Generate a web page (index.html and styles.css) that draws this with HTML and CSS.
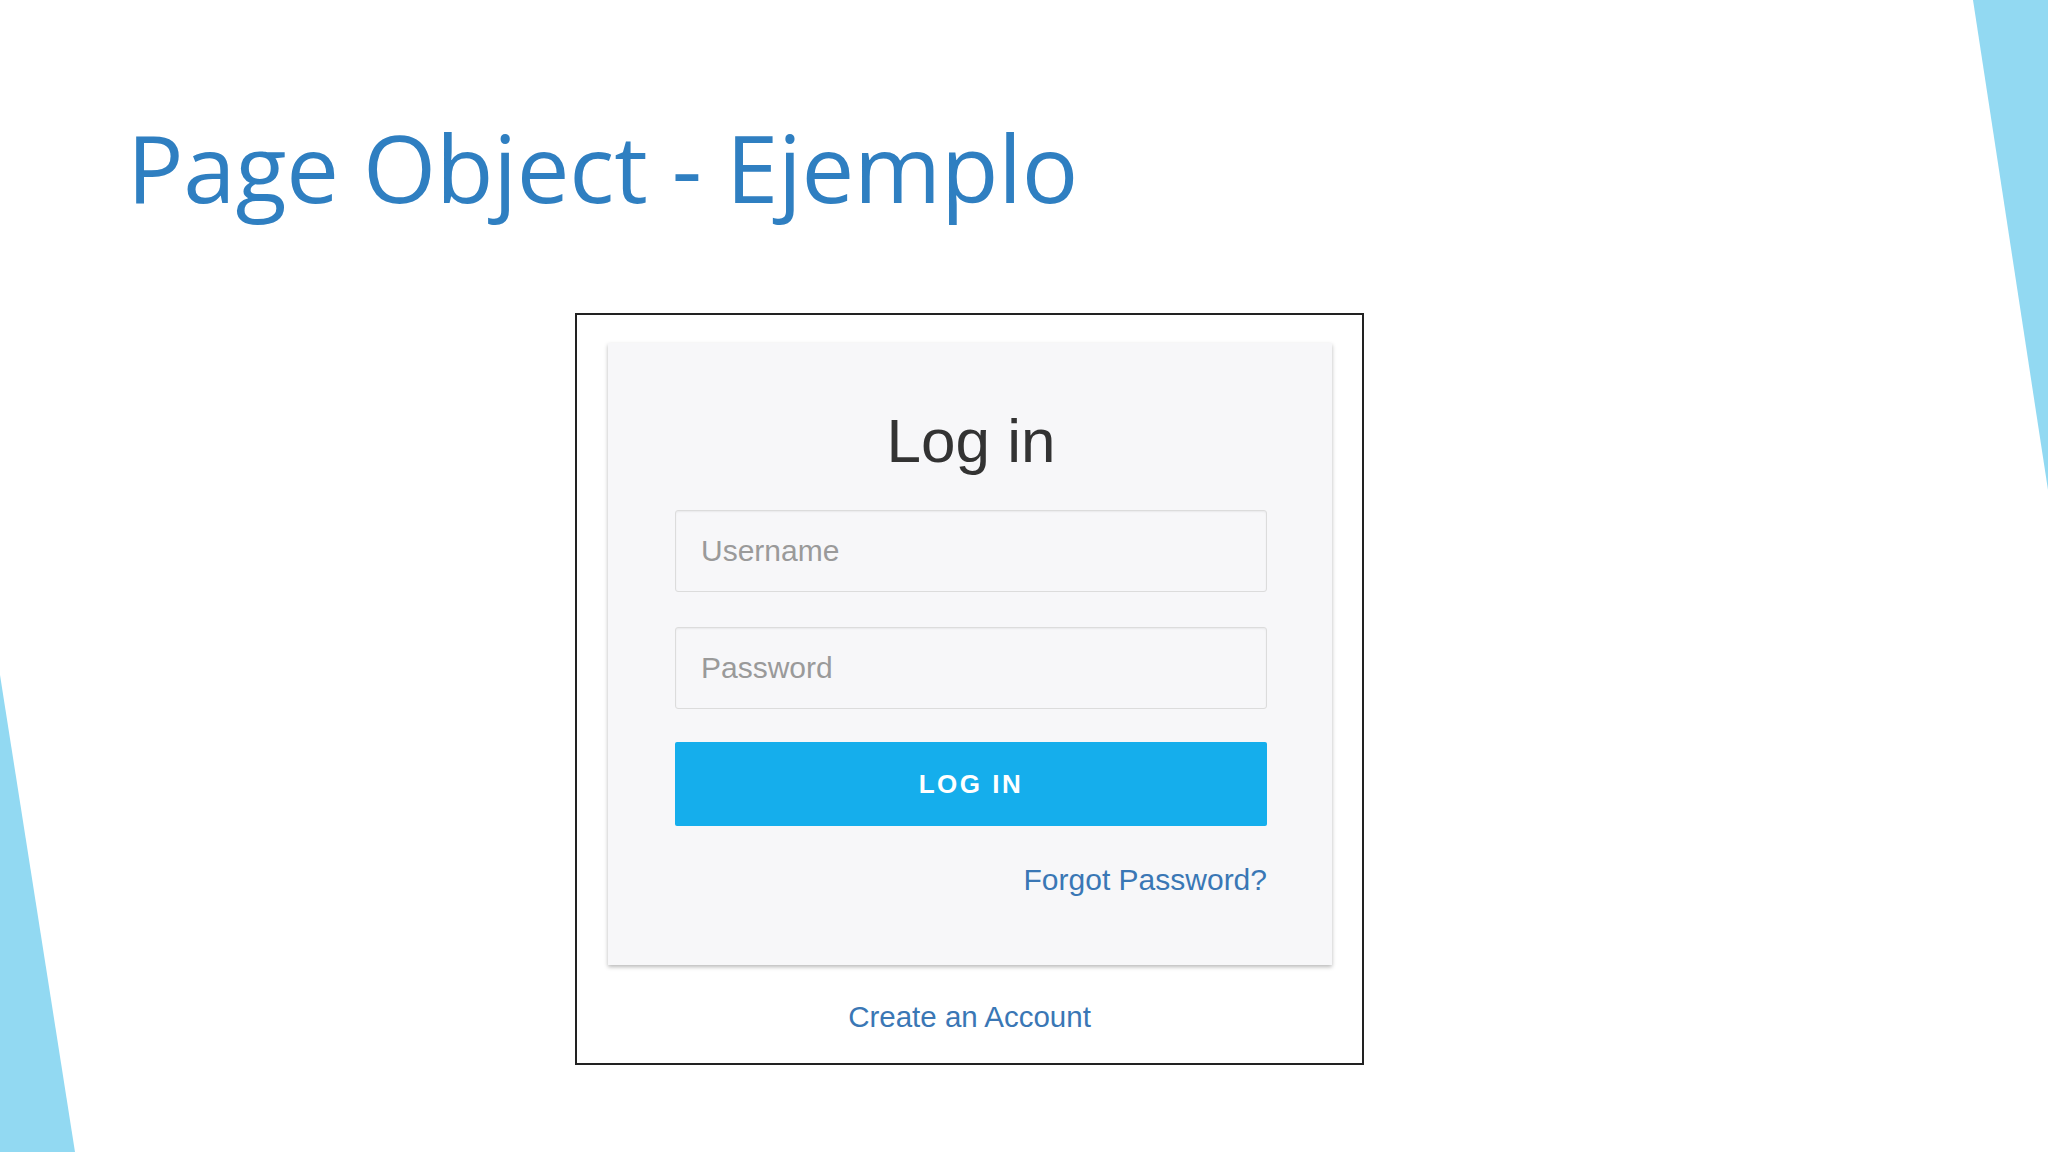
FILE: index.html
```html
<!DOCTYPE html>
<html lang="es">
<head>
<meta charset="utf-8">
<title>Page Object - Ejemplo</title>
<link rel="stylesheet" href="styles.css">
</head>
<body>
<div class="slide">
  <svg class="deco deco-right" width="75" height="490" viewBox="0 0 75 490"><polygon points="0,0 75,0 75,490" fill="#92d9f2"/></svg>
  <svg class="deco deco-left" width="75" height="477" viewBox="0 0 75 477"><polygon points="0,0 75,477 0,477" fill="#92d9f2"/></svg>
  <h1 class="title">Page Object - Ejemplo</h1>
  <div class="frame">
    <div class="card">
      <h2 class="card-heading">Log in</h2>
      <input class="field" type="text" placeholder="Username">
      <input class="field field-gap" type="password" placeholder="Password">
      <button class="btn">LOG IN</button>
      <div class="forgot"><a href="#">Forgot Password?</a></div>
    </div>
    <div class="create"><a href="#">Create an Account</a></div>
  </div>
</div>
</body>
</html>
```

FILE: styles.css
```css
html, body {
  margin: 0;
  padding: 0;
  background: #ffffff;
}
.slide {
  position: relative;
  width: 2048px;
  height: 1152px;
  overflow: hidden;
  padding-top: 120px;
  box-sizing: border-box;
  display: flex;
  flex-direction: column;
  align-items: flex-start;
}
.deco {
  position: absolute;
  display: block;
}
.deco-right {
  top: 0;
  right: 0;
}
.deco-left {
  left: 0;
  bottom: 0;
}
.title {
  margin: 0 0 0 127px;
  font-family: "Open Sans", "Noto Sans", sans-serif;
  font-weight: 400;
  font-size: 94px;
  line-height: 94px;
  color: #2f7fc1;
  letter-spacing: -0.2px;
}
.frame {
  margin: 99px 0 0 575px;
  width: 789px;
  height: 752px;
  box-sizing: border-box;
  border: 2px solid #222;
  padding: 28px 0 0 31px;
  font-family: "Liberation Sans", Arial, sans-serif;
}
.card {
  width: 724px;
  box-sizing: border-box;
  padding: 64px 65px 68px 67px;
  background: #f7f7f9;
  box-shadow: 0 2px 4px rgba(0, 0, 0, 0.28);
  display: flex;
  flex-direction: column;
}
.card-heading {
  margin: 0 0 35px;
  font-size: 62px;
  line-height: 68px;
  font-weight: 400;
  color: #333;
  text-align: center;
}
.field {
  display: block;
  width: 592px;
  height: 82px;
  box-sizing: border-box;
  margin: 0;
  border: 1px solid #dcdcdc;
  border-radius: 3px;
  background: #f7f7f9;
  box-shadow: inset 0 1px 2px rgba(0, 0, 0, 0.06);
  padding: 0 0 0 25px;
  font-family: "Liberation Sans", Arial, sans-serif;
  font-size: 30px;
  color: #555;
}
.field::placeholder {
  color: #9a9a9a;
}
.field-gap {
  margin-top: 35px;
}
.btn {
  display: block;
  width: 592px;
  height: 84px;
  margin: 33px 0 0;
  border: 0;
  border-radius: 2px;
  background: #15aeec;
  color: #fff;
  font-family: "Liberation Sans", Arial, sans-serif;
  font-weight: 700;
  font-size: 26px;
  letter-spacing: 2.5px;
}
.forgot {
  margin-top: 37px;
  text-align: right;
  font-size: 30px;
  line-height: 34px;
}
.forgot a, .create a {
  color: #3a77b5;
  text-decoration: none;
}
.create {
  margin: 35px 31px 0 0;
  text-align: center;
  font-size: 29.5px;
  line-height: 34px;
}
```
